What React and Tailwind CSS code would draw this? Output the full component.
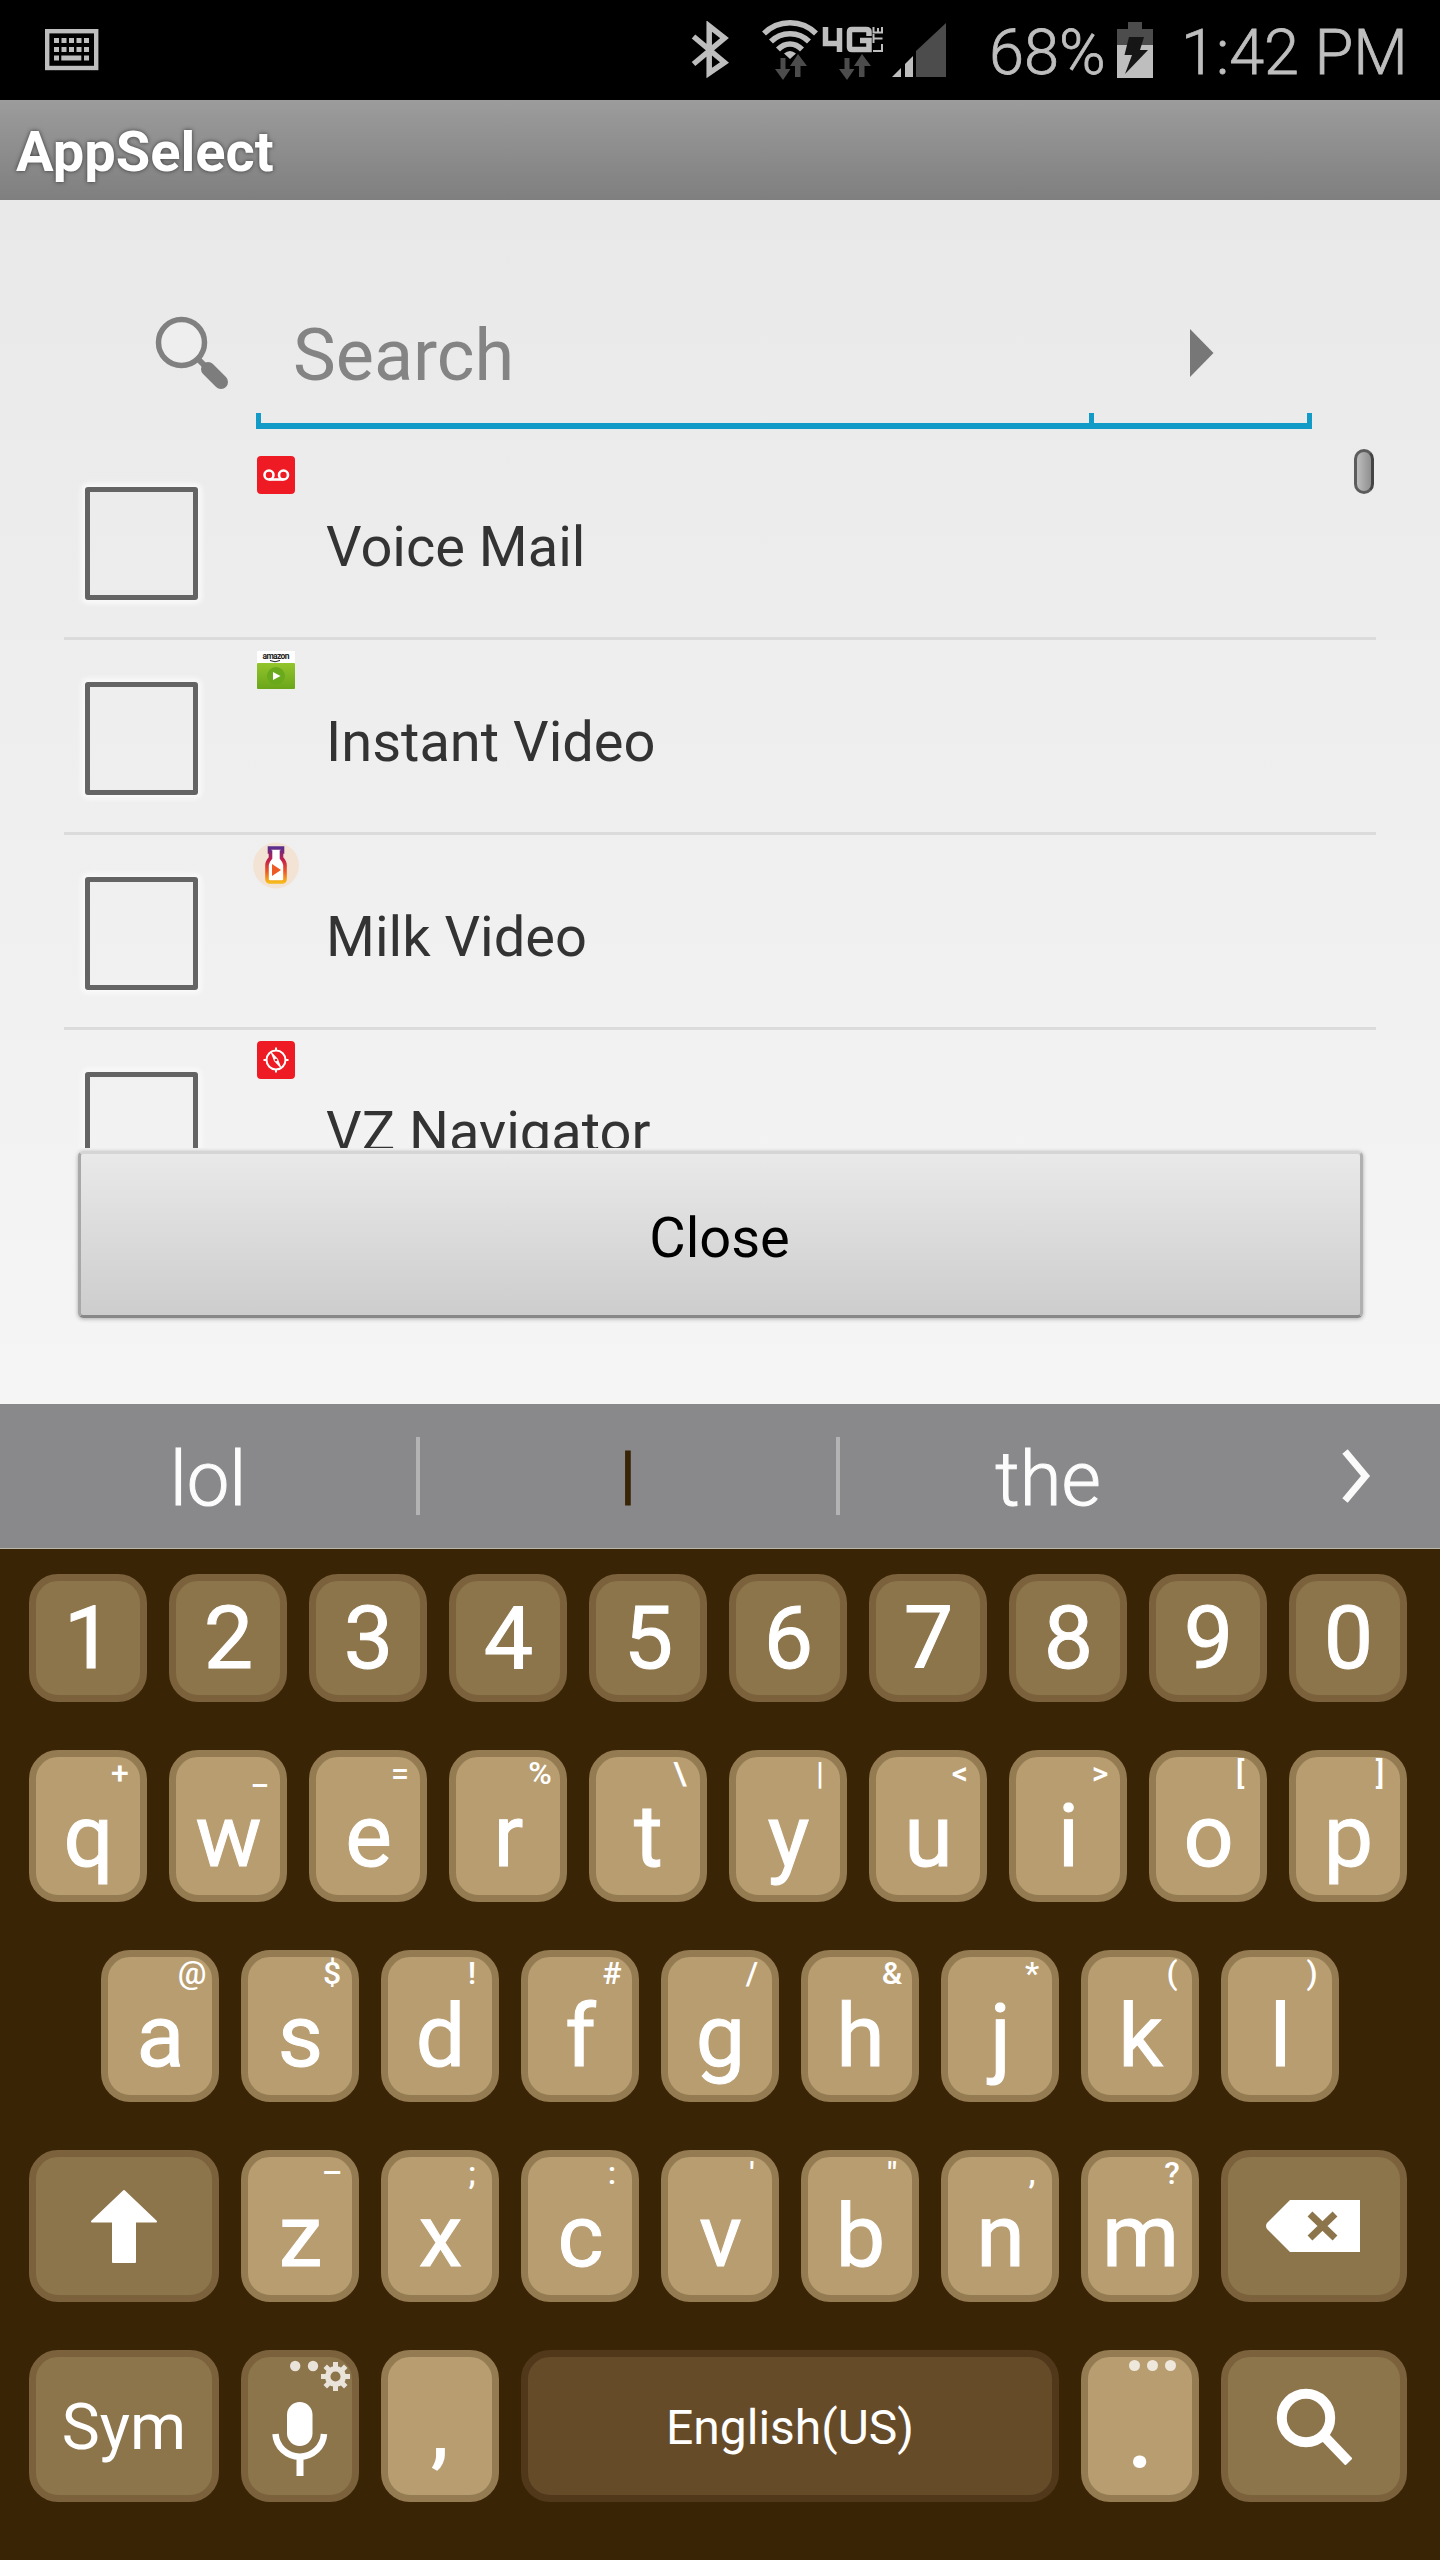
function KeyboardIcon() {
  const cells = [0, 1, 2, 3, 4];
  return (
    <svg width="54" height="42" viewBox="0 0 54 42" fill="#bebebe">
      <rect x="2.2" y="2.2" width="49" height="36.8" fill="none" stroke="#bebebe" strokeWidth="4.4" />
      {cells.map((i) => (
        <rect key={`a${i}`} x={9 + i * 7.5} y="9" width="5" height="5" />
      ))}
      {cells.map((i) => (
        <rect key={`b${i}`} x={9 + i * 7.5} y="18" width="5" height="5" />
      ))}
      <rect x="9" y="26.5" width="5" height="5" />
      <rect x="16.3" y="26.5" width="20" height="5" />
      <rect x="39" y="26.5" width="5" height="5" />
    </svg>
  );
}

function BluetoothIcon() {
  return (
    <svg width="38" height="58" viewBox="0 0 38 58" fill="none" stroke="#bebebe" strokeWidth="5.500">
      <path d="M2.5 15.5 L33.5 41.5 L18.2 52 V5 L33.5 17 L2.5 43" />
    </svg>
  );
}

function DataArrows({ x, y }) {
  return (
    <g fill="#4c4c4c" stroke="none" transform={`translate(${x} ${y})`}>
      <path d="M5.500 3h5v11h5L8 25 0 14h5.500z" />
      <path d="M20 22h5.500V11H32L23 -1 15 11h5z" />
    </g>
  );
}

function WifiIcon() {
  return (
    <svg width="56" height="62" viewBox="0 0 56 62" fill="none" stroke="#bebebe" strokeWidth="5.500">
      <path d="M2 14.500C16 0 40 0 54 14.500" />
      <path d="M9 22.500C19 12 37 12 47 22.500" />
      <path d="M16 30.500C23 23 33 23 40 30.500" />
      <path d="M22 34.500Q28 29.500 34 34.500L28 40z" fill="#bebebe" stroke="none" />
      <DataArrows x={13} y={36} />
    </svg>
  );
}

function NetworkIcon() {
  return (
    <svg width="62" height="62" viewBox="0 0 62 62" fill="none" stroke="#bebebe" strokeWidth="5.500">
      <path d="M3.500 8V24.500H20M17.500 9V33" />
      <path d="M47 17V12.500Q47 10.500 44 10.500H30Q27.500 10.500 27.500 13V28Q27.500 30.500 30 30.500H47V21.500H38" />
      <g strokeWidth="2">
        <path d="M51 32H60V25" />
        <path d="M51.500 24V15M51.500 19.500H60.500" />
        <path d="M51.500 8V13.500H60V8M56 13.500V9" />
      </g>
      <DataArrows x={17} y={36} />
    </svg>
  );
}

function SignalIcon() {
  return (
    <svg width="54" height="56" viewBox="0 0 54 56">
      <path d="M0 55L9 46V55z" fill="#bebebe" />
      <path d="M13 55V42L21 34V55z" fill="#bebebe" />
      <path d="M24 55V29L54 1V55z" fill="#4c4c4c" />
    </svg>
  );
}

function BatteryIcon() {
  return (
    <svg width="36" height="56" viewBox="0 0 36 56">
      <path d="M11 0H25V7H36V24H0V7H11z" fill="#4c4c4c" />
      <path d="M0 23H36V56H0z" fill="#bebebe" />
      <path d="M12 15H27L23 28H31L8 52L15 33H7.500z" fill="#161616" />
    </svg>
  );
}

function StatusBar() {
  return (
    <header className="flex h-[100px] items-center bg-black text-[63px] font-light text-[#bebebe] [-webkit-text-stroke:0.8px_#bebebe]">
      <div className="ml-[45px]">
        <KeyboardIcon />
      </div>
      <div className="ml-auto flex items-center">
        <BluetoothIcon />
        <div className="ml-[33px]">
          <WifiIcon />
        </div>
        <div className="ml-[4px]">
          <NetworkIcon />
        </div>
        <div className="ml-[8px]">
          <SignalIcon />
        </div>
        <span className="ml-[43px] w-[119px] pt-[5px] leading-none whitespace-nowrap">68%</span>
        <div className="ml-[9px]">
          <BatteryIcon />
        </div>
        <span className="ml-[28px] w-[259px] pt-[5px] leading-none whitespace-nowrap">1:42 PM</span>
      </div>
    </header>
  );
}

function VoiceMailIcon() {
  return (
    <svg width="38" height="38" viewBox="0 0 38 38">
      <rect width="38" height="38" rx="4" fill="#ee1b24" />
      <g fill="none" stroke="#fff" strokeWidth="2.600">
        <circle cx="12" cy="19" r="4.500" />
        <circle cx="26.500" cy="19" r="4.500" />
        <path d="M12 23.500H26.500" />
      </g>
    </svg>
  );
}

function InstantVideoIcon() {
  return (
    <svg width="38" height="38" viewBox="0 0 38 38">
      <defs>
        <linearGradient id="leaf" x1="0" y1="0" x2="0" y2="1">
          <stop offset="0" stopColor="#93c52c" />
          <stop offset="1" stopColor="#6aa51a" />
        </linearGradient>
      </defs>
      <rect width="38" height="14" fill="#fff" />
      <rect y="12" width="38" height="26" rx="1" fill="url(#leaf)" />
      <text x="19" y="7.500" fontSize="8.500" fontWeight="700" textAnchor="middle" fill="#222" textLength="27">
        amazon
      </text>
      <path d="M13 9.500Q18 12 23 9.500" fill="none" stroke="#222" strokeWidth="1" />
      <circle cx="19" cy="25" r="9" fill="#6aa91c" />
      <path d="M16 21L23.500 25L16 29z" fill="#fff" />
    </svg>
  );
}

function MilkVideoIcon() {
  return (
    <svg width="38" height="38" viewBox="0 0 38 38" className="overflow-visible">
      <defs>
        <linearGradient id="milk" x1="0" y1="0" x2="0" y2="1">
          <stop offset="0" stopColor="#5b2d8c" />
          <stop offset="0.35" stopColor="#c21f4a" />
          <stop offset="0.7" stopColor="#ee5a24" />
          <stop offset="1" stopColor="#f6b81a" />
        </linearGradient>
      </defs>
      <circle cx="19" cy="19.500" r="23" fill="#f3e3d5" />
      <path
        d="M12.500 2H25.500V6H24.500V12Q28 16 28 19V33Q28 36 25 36H13Q10 36 10 33V19Q10 16 13.500 12V6H12.500z"
        fill="#fff"
        stroke="url(#milk)"
        strokeWidth="3.600"
      />
      <path d="M15 18L24 24L15 30z" fill="#ee5a24" />
    </svg>
  );
}

function NavigatorIcon() {
  return (
    <svg width="38" height="38" viewBox="0 0 38 38">
      <rect width="38" height="38" rx="4" fill="#ee1b24" />
      <circle cx="19" cy="19" r="9.500" fill="none" stroke="#fff" strokeWidth="2" />
      <path d="M19 6.500V10M19 28V31.500M6.500 19H10M28 19H31.500" stroke="#fff" strokeWidth="2" />
      <path d="M13 9.500L21 18L25 28.500L17 20z" fill="#fff" />
      <circle cx="19" cy="19" r="1.300" fill="#ee1b24" />
    </svg>
  );
}

const apps = [
  { name: "Voice Mail", Icon: VoiceMailIcon },
  { name: "Instant Video", Icon: InstantVideoIcon },
  { name: "Milk Video", Icon: MilkVideoIcon },
  { name: "VZ Navigator", Icon: NavigatorIcon },
];

function SearchField() {
  return (
    <div className="flex h-[229px] items-end pl-[155px]">
      <svg width="76" height="76" viewBox="0 0 76 76" className="mb-[37px]">
        <circle cx="26.500" cy="26.500" r="23" fill="#eeeeee" stroke="#808080" strokeWidth="5.500" />
        <path d="M43 43L51 51" stroke="#808080" strokeWidth="6" />
        <path d="M53 53L66 66" stroke="#7d7d7d" strokeWidth="14" strokeLinecap="round" />
      </svg>
      <div className="ml-[25px] flex flex-col">
        <div className="flex h-[129px]">
          <div className="flex w-[835px] items-center pb-[17px] pl-[37px] text-[72px] leading-none text-[#848484]">
            Search
          </div>
          <div className="flex w-[221px] items-center justify-center pr-[6px]">
            <svg width="26" height="50" viewBox="0 0 26 50" className="mb-[24px] ml-[6px]">
              <path d="M1 1L24.500 25L1 49z" fill="#777" />
            </svg>
          </div>
        </div>
        <div className="-mt-[16px] flex h-[16px] w-[1056px] border-b-[6px] border-[#119bc6]">
          <div className="w-[838px] border-x-[5px] border-[#119bc6]" />
          <div className="flex-1 border-r-[5px] border-[#119bc6]" />
        </div>
      </div>
    </div>
  );
}

function AppList() {
  return (
    <div className="relative mt-[16px] h-[703px] overflow-hidden px-[64px]">
      {apps.map(({ name, Icon }) => (
        <div key={name} className="flex h-[195px] items-start border-b-[3px] border-[#dbdbdb]">
          <div className="mt-[42px] ml-[21px] size-[113px] rounded-[3px] border-[5px] border-[#646464] shadow-[0_0_4px_4px_#f9f9f9]" />
          <div className="mt-[11px] ml-[59px]">
            <Icon />
          </div>
          <span className="mt-[74px] ml-[31px] text-[56px] leading-[56px] text-[#333]">{name}</span>
        </div>
      ))}
      <div className="absolute top-[4px] right-[66px] h-[45px] w-[20px] rounded-full border-[3px] border-[#5c5c5c] border-r-[#444] bg-linear-to-r from-[#bdbdbd] to-[#909090]" />
    </div>
  );
}

function SuggestionBar() {
  return (
    <div className="flex h-[145px] items-center border-b border-[#b9b7a8] bg-[#89898b] text-[76px] leading-none font-light text-[#fcfcfc] [-webkit-text-stroke:1px_currentColor]">
      <span className="w-[416px] pt-[6px] text-center">lol</span>
      <div className="h-[78px] w-[4px] bg-[#b3b3b3]" />
      <span className="w-[416px] pt-[6px] text-center text-[#382406] [-webkit-text-stroke:1px_#382406]">I</span>
      <div className="h-[78px] w-[4px] bg-[#b3b3b3]" />
      <span className="w-[416px] pt-[6px] text-center">the</span>
      <svg width="34" height="56" viewBox="0 0 34 56" className="ml-[85px]">
        <path d="M4 3.500L24.500 28L4 52.500" fill="none" stroke="#fafafa" strokeWidth="7" />
      </svg>
    </div>
  );
}

const tones = {
  light: "border-[#957b51] bg-[#b89d71]",
  mid: "border-[#7b623c] bg-[#8c744b]",
  dark: "border-[#52381b] bg-[#664b29]",
};

function Key({ tone = "light", size = "h-[152px] w-[118px]", hint, children }) {
  return (
    <div
      className={`relative flex items-center justify-center rounded-[29px] border-[7px] text-white ${tones[tone]} ${size}`}
    >
      {hint && (
        <span className="absolute top-0 left-[63px] w-[42px] text-center text-[32px] leading-[32px] font-medium">
          {hint}
        </span>
      )}
      {children}
    </div>
  );
}

function LetterKey({ letter, hint }) {
  return (
    <Key hint={hint}>
      <span className="pt-[20px] pl-[1px] text-[88px] leading-none [-webkit-text-stroke:1px_#fff]">{letter}</span>
    </Key>
  );
}

const topRow = [
  ["q", "+"], ["w", "_"], ["e", "="], ["r", "%"], ["t", "\\"],
  ["y", "|"], ["u", "<"], ["i", ">"], ["o", "["], ["p", "]"],
];
const homeRow = [
  ["a", "@"], ["s", "$"], ["d", "!"], ["f", "#"], ["g", "/"],
  ["h", "&"], ["j", "*"], ["k", "("], ["l", ")"],
];
const bottomRow = [["z", "–"], ["x", ";"], ["c", ":"], ["v", "'"], ["b", '"'], ["n", ","], ["m", "?"]];

function Letters({ keys }) {
  return keys.map(([letter, hint]) => <LetterKey key={letter} letter={letter} hint={hint} />);
}

const gearTeeth = [0, 45, 90, 135, 180, 225, 270, 315];

function MicKey() {
  return (
    <Key tone="mid">
      <svg width="104" height="138" viewBox="0 0 104 138" fill="#fff" className="shrink-0">
        <g fill="#e9e3da">
          <circle cx="47.200" cy="9" r="5.200" />
          <circle cx="65" cy="9" r="5.200" />
          {gearTeeth.map((a) => (
            <rect key={a} x="85" y="5" width="5" height="7" transform={`rotate(${a} 87.500 19.500)`} />
          ))}
          <circle cx="87.500" cy="19.500" r="7.800" fill="none" stroke="#e9e3da" strokeWidth="5.500" />
        </g>
        <rect x="39" y="45" width="25.500" height="44" rx="12.700" />
        <path d="M27.500 77A24.300 24.300 0 0 0 76 77" fill="none" stroke="#fff" strokeWidth="6.500" />
        <rect x="48.500" y="100" width="7" height="19" />
      </svg>
    </Key>
  );
}

function Keyboard() {
  return (
    <div className="flex h-[1011px] flex-col bg-[#392406] pt-[25px] pl-[29px]">
      <div className="flex gap-[22px]">
        {["1", "2", "3", "4", "5", "6", "7", "8", "9", "0"].map((n) => (
          <Key key={n} tone="mid" size="h-[128px] w-[118px]">
            <span className="pl-[1px] text-[88px] leading-none [-webkit-text-stroke:1px_#fff]">{n}</span>
          </Key>
        ))}
      </div>
      <div className="mt-[48px] flex gap-[22px]">
        <Letters keys={topRow} />
      </div>
      <div className="mt-[48px] flex gap-[22px] pl-[72px]">
        <Letters keys={homeRow} />
      </div>
      <div className="mt-[48px] flex gap-[22px]">
        <Key tone="mid" size="h-[152px] w-[190px]">
          <svg width="68" height="74" viewBox="0 0 68 74" fill="#fff" className="mr-[1px] shrink-0">
            <path
              d="M34 2L66 32.500H45V73H23V32.500H2z"
              stroke="#fff"
              strokeWidth="2"
              strokeLinejoin="round"
            />
          </svg>
        </Key>
        <Letters keys={bottomRow} />
        <Key tone="mid" size="h-[152px] w-[186px]">
          <svg width="94" height="52" viewBox="0 0 94 52" className="mr-[2px] shrink-0">
            <path d="M24 0H94V52H24L1 29Q-1 26 1 23z" fill="#fff" />
            <path d="M44 14L69 38M69 14L44 38" stroke="#8c744b" strokeWidth="7" />
          </svg>
        </Key>
      </div>
      <div className="mt-[48px] flex gap-[22px]">
        <Key tone="mid" size="h-[152px] w-[190px]">
          <span className="pt-[3px] text-[64px] leading-none">Sym</span>
        </Key>
        <MicKey />
        <Key>
          <span className="pt-[5px] text-[84px] leading-none font-medium">,</span>
        </Key>
        <Key tone="dark" size="h-[152px] w-[538px]">
          <span className="pt-[3px] text-[48px] leading-none">English(US)</span>
        </Key>
        <Key>
          <span className="pt-[16px] text-[96px] leading-none font-medium">.</span>
          <div className="absolute top-[3px] right-[16px] flex gap-[7px]">
            <i className="size-[11px] rounded-full bg-[#eee7dc]" />
            <i className="size-[11px] rounded-full bg-[#eee7dc]" />
            <i className="size-[11px] rounded-full bg-[#eee7dc]" />
          </div>
        </Key>
        <Key tone="mid" size="h-[152px] w-[186px]">
          <svg width="76" height="78" viewBox="0 0 76 78" fill="none" stroke="#fff" strokeWidth="10" className="mr-[1px] shrink-0">
            <circle cx="30" cy="31" r="24.200" />
            <path d="M47 48L73 75" />
          </svg>
        </Key>
      </div>
    </div>
  );
}

export default function App() {
  return (
    <div className="flex h-[2560px] w-[1440px] flex-col overflow-hidden font-[Roboto,sans-serif]">
      <StatusBar />
      <div className="flex h-[100px] items-center bg-linear-to-b from-[#9c9c9c] to-[#7f7f7f] pt-[4px] pl-[16px] text-[56px] leading-none font-bold text-white [text-shadow:0_0_4px_rgba(0,0,0,0.6)]">
        AppSelect
      </div>
      <main className="h-[1204px] bg-linear-to-b from-[#e9e9e9] to-[#f5f5f5]">
        <SearchField />
        <AppList />
        <button className="mt-[3px] ml-[78px] flex h-[167px] w-[1285px] items-center justify-center rounded-[5px] border-3 border-t-[#d5d5d5] border-r-[#b0b0b0] border-b-[#888] border-l-[#a8a8a8] bg-linear-to-b from-[#e9e9e9] to-[#cdcdcd] pt-[6px] pr-[2px] text-[56px] leading-none text-black shadow-[0_1px_4px_rgba(0,0,0,0.3)]">
          Close
        </button>
      </main>
      <SuggestionBar />
      <Keyboard />
    </div>
  );
}
